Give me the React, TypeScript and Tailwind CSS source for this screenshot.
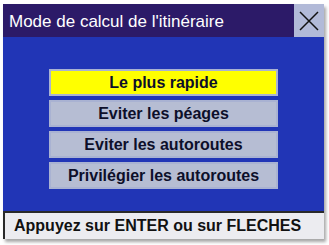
import React from 'react';

const options = ['Le plus rapide', 'Eviter les péages', 'Eviter les autoroutes', 'Privilégier les autoroutes'];

export default function App() {
  return (
    <div className="w-[329px] h-[245px] bg-white overflow-hidden" style={{ fontFamily: '"Liberation Sans", Arial, sans-serif' }}>
      <div className="ml-[3px] mt-[4px] w-[321px] h-[235px] flex flex-col shadow-[2px_3px_3px_rgba(0,0,0,0.35)]">
        <div className="h-[33px] flex">
          <div className="flex-1 bg-[#2c1a68] text-white text-[17px] leading-none flex items-center pl-[6px] pt-[1px]">
            Mode de calcul de l'itinéraire
          </div>
          <div className="w-[30px] bg-[#b2bad8] flex items-center justify-center">
            <svg width="22" height="22" viewBox="0 0 22 22">
              <path d="M2 2 L20 20 M20 2 L2 20" stroke="#111" strokeWidth="1.5" fill="none" />
            </svg>
          </div>
        </div>
        <div className="flex-1 bg-[#2135b6] flex flex-col items-center pt-[32px] gap-[4px]">
          {options.map((o, i) => (
            <div
              key={o}
              className={
                'w-[229px] h-[27px] border-2 border-[#a9b2d2] flex items-center justify-center text-[16px] font-bold text-[#0d0f2a] ' +
                (i === 0 ? 'bg-[#ffff00]' : 'bg-[#b6bdd3]')
              }
            >
              {o}
            </div>
          ))}
        </div>
        <div className="h-[28px] bg-[#ececf0] border-t-2 border-l-2 border-[#2a2a2a] flex items-center pl-[9px] text-[16px] font-bold text-[#111]">
          Appuyez sur ENTER ou sur FLECHES
        </div>
      </div>
    </div>
  );
}
